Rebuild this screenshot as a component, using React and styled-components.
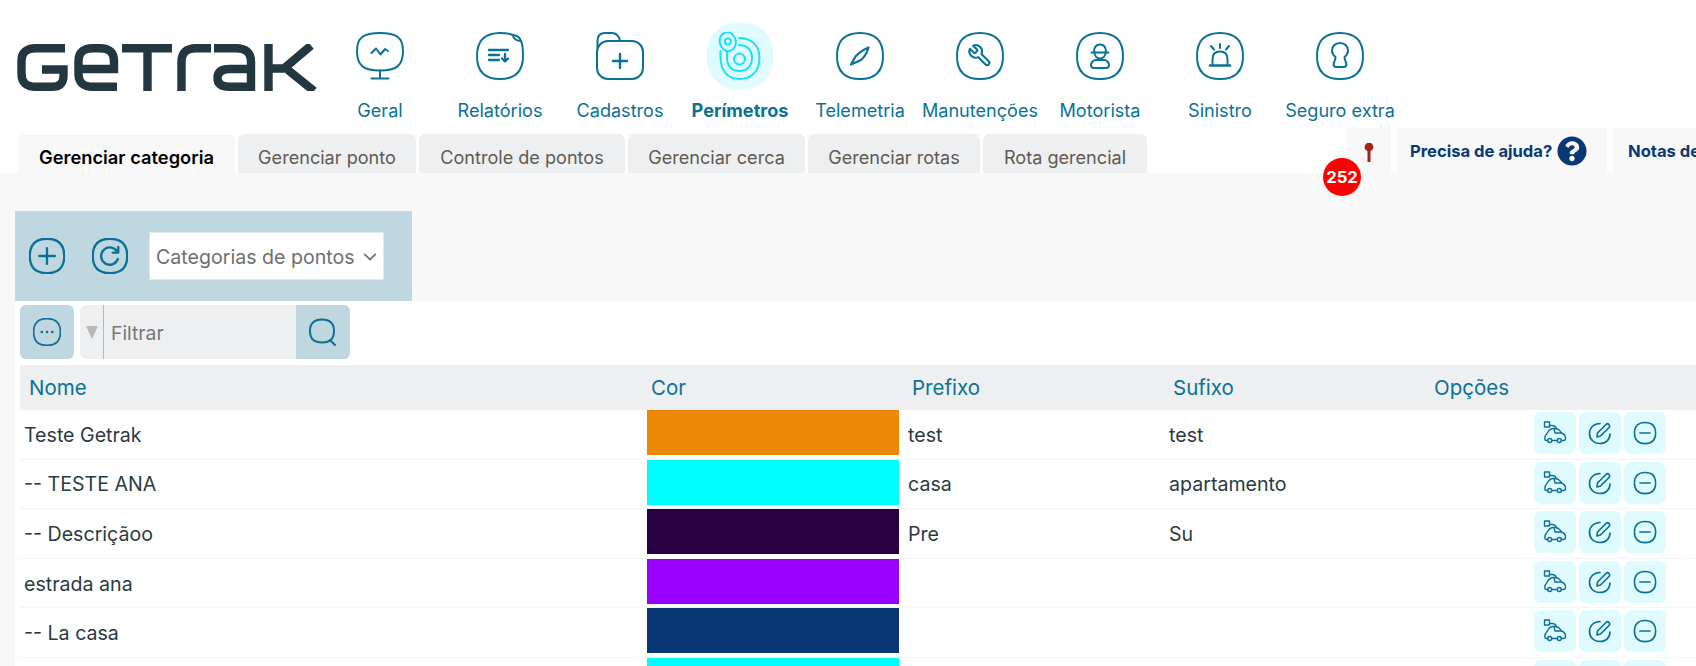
import React from 'react';
import styled, { createGlobalStyle } from 'styled-components';
import { FaQuestionCircle } from 'react-icons/fa';

const TEAL = '#0a7295';
const CYAN = '#17e3f4';
const SQUIRCLE = 'M24 1C39 1 47 9 47 24C47 39 39 47 24 47C9 47 1 39 1 24C1 9 9 1 24 1Z';

const GlobalStyle = createGlobalStyle`
  html, body {
    margin: 0;
    padding: 0;
    height: 100%;
    overflow: hidden;
    background: #f8f8f9;
    font-family: Inter, "Liberation Sans", sans-serif;
  }
`;

const Page = styled.div`
  width: 1696px;
  height: 666px;
  overflow: hidden;
`;

const Header = styled.header`
  background: #fff;
  height: 173px;
`;

const TopRow = styled.div`
  display: flex;
  height: 128px;
  padding-left: 17px;
`;

const LogoMark = styled.svg`
  width: 300px;
  height: 47px;
  margin: 44px 3px 0 0;
  flex: none;
  fill: none;
  stroke: #22373f;
  stroke-width: 8.4;
`;

const Nav = styled.nav`
  display: flex;
`;

const NavItem = styled.div`
  width: 120px;
  padding-top: 23px;
  display: flex;
  flex-direction: column;
  align-items: center;
`;

const NavIconWrap = styled.div`
  width: 66px;
  height: 66px;
  display: flex;
  align-items: center;
  justify-content: center;
  border-radius: 44%;
  color: ${(p) => (p.$active ? CYAN : TEAL)};
  background: ${(p) => (p.$active ? '#e0fbff' : 'transparent')};
`;

const NavLabel = styled.span`
  margin-top: 11px;
  font-size: 18.1px;
  line-height: 20px;
  white-space: nowrap;
  color: ${TEAL};
  font-weight: ${(p) => (p.$active ? 700 : 400)};
`;

const Glyph = styled.svg`
  width: ${(p) => p.$size}px;
  height: ${(p) => p.$h || p.$size}px;
  flex: none;
  fill: none;
  stroke: currentColor;
  stroke-width: ${(p) => p.$stroke || 2};
  stroke-linecap: round;
  stroke-linejoin: round;
`;

const BottomRow = styled.div`
  display: flex;
  align-items: flex-end;
  height: 45px;
`;

const Tabs = styled.div`
  flex: 0 0 1346px;
  display: flex;
  gap: 3px;
  padding-left: 18px;
  box-sizing: border-box;
`;

const Tab = styled.div`
  height: 39px;
  width: ${(p) => p.$w}px;
  padding-top: 7px;
  box-sizing: border-box;
  display: flex;
  align-items: center;
  justify-content: center;
  border-radius: 6px 6px 0 0;
  font-size: ${(p) => (p.$active ? 18.3 : 18.1)}px;
  white-space: nowrap;
  background: ${(p) => (p.$active ? '#f8f8f9' : '#eeeff1')};
  color: ${(p) => (p.$active ? '#000' : '#5f5a52')};
  font-weight: ${(p) => (p.$active ? 600 : 400)};
`;

const QuickLinks = styled.div`
  display: flex;
  gap: 6px;
  height: 45px;
`;

const PinBox = styled.div`
  position: relative;
  width: 45px;
  background: #f8f8f9;
  display: flex;
  justify-content: center;
  padding-top: 15px;
  box-sizing: border-box;
  color: #a1241a;
`;

const Badge = styled.span`
  position: absolute;
  left: -23px;
  top: 30px;
  width: 38px;
  height: 38px;
  border-radius: 50%;
  background: #ff0000;
  color: #fff;
  font-size: 16.6px;
  font-weight: 700;
  display: flex;
  align-items: center;
  justify-content: center;
`;

const HelpLink = styled.div`
  background: #f8f8f9;
  display: flex;
  align-items: center;
  gap: 5px;
  width: ${(p) => p.$w}px;
  padding-left: ${(p) => p.$pad}px;
  box-sizing: border-box;
  color: #0a3875;
  font-size: 16.6px;
  font-weight: 700;
  white-space: nowrap;
  overflow: hidden;
`;

const Band = styled.section`
  height: 128px;
  padding: 38px 0 0 15px;
  box-sizing: border-box;
  background: #f8f8f9;
`;

const Toolbar = styled.div`
  width: 397px;
  height: 90px;
  padding-left: 14px;
  box-sizing: border-box;
  display: flex;
  align-items: center;
  gap: 27px;
  background: #bfd7e0;
  color: ${TEAL};
`;

const SelectBox = styled.div`
  width: 235px;
  height: 48px;
  margin-left: -6px;
  padding: 1px 6px 0;
  box-sizing: border-box;
  display: flex;
  align-items: center;
  justify-content: space-between;
  background: #fff;
  border: 1px solid #e4e8ea;
  color: #6f6f6f;
  font-size: 19.6px;
  white-space: nowrap;
`;

const Panel = styled.main`
  margin-left: 15px;
  height: 365px;
  padding: 4px 0 0 5px;
  box-sizing: border-box;
  background: #fff;
  overflow: hidden;
`;

const FilterRow = styled.div`
  display: flex;
  gap: 6px;
  height: 54px;
  margin-bottom: 6px;
`;

const MoreButton = styled.div`
  width: 54px;
  height: 54px;
  border-radius: 6px;
  background: #bfd7e0;
  color: ${TEAL};
  display: flex;
  align-items: center;
  justify-content: center;
`;

const FilterBox = styled.div`
  width: 270px;
  display: flex;
  border-radius: 6px;
  overflow: hidden;
  background: #eeeff1;
`;

const FunnelCell = styled.div`
  width: 24px;
  box-sizing: border-box;
  border-right: 1px solid #b9b9b9;
  display: flex;
  align-items: center;
  justify-content: center;
  &::before {
    content: '';
    border-left: 6px solid transparent;
    border-right: 6px solid transparent;
    border-top: 13px solid #b8b8b8;
  }
`;

const FilterText = styled.div`
  flex: 1;
  padding: 2px 0 0 7px;
  display: flex;
  align-items: center;
  color: #777;
  font-size: 19.3px;
`;

const SearchButton = styled.div`
  width: 54px;
  background: #bfd7e0;
  color: ${TEAL};
  display: flex;
  align-items: center;
  justify-content: center;
`;

const HeadRow = styled.div`
  display: grid;
  grid-template-columns: 627px 261px 261px 261px 1fr;
  align-items: center;
  height: 45px;
  background: #eeeff1;
`;

const HeadCell = styled.div`
  padding-left: ${(p) => p.$pad}px;
  color: ${TEAL};
  font-size: 20.5px;
  font-weight: 400;
`;

const Row = styled.div`
  display: grid;
  grid-template-columns: 627px 261px 261px 261px 1fr;
  align-items: center;
  height: 49.6px;
  box-sizing: border-box;
  border-bottom: 1.5px solid #f5f5f6;
`;

const Cell = styled.div`
  padding: 1px 0 0 ${(p) => p.$pad || 0}px;
  color: #2b3a42;
  font-size: 19.6px;
`;

const Swatch = styled.div`
  align-self: start;
  width: 252px;
  height: 45px;
  background: ${(p) => p.$color};
`;

const Actions = styled.div`
  align-self: start;
  display: flex;
  gap: 3px;
  margin-top: 2px;
  padding-left: 104px;
`;

const ActionButton = styled.div`
  width: 42px;
  height: 42px;
  border-radius: 7px;
  background: #e0fbff;
  color: ${TEAL};
  display: flex;
  align-items: center;
  justify-content: center;
`;

const Logo = () => (
  <LogoMark viewBox="17 44 300 47" aria-label="Getrak">
    <path d="M65 48.2H36Q21.5 48.2 21.5 61V74Q21.5 86.8 36 86.8H52Q63.5 86.8 63.5 76V69.5H42" />
    <path d="M117 86.8H93Q78.5 86.8 78.5 74V61Q78.5 48.2 93 48.2H100Q114 48.2 114 61V69H79" />
    <path d="M122 48.2H172M147.5 48.2V91" />
    <path d="M181.5 91V62Q181.5 48.2 196 48.2H211" />
    <path d="M214 48.2H236Q251 48.2 251 62V91M251 69H230Q217.5 69 217.5 78Q217.5 86.8 230 86.8H251" />
    <path d="M268.5 44V91M268.5 68.5H284L311 45.5M288 70L314 91" />
  </LogoMark>
);

const navIcons = {
  geral: (
    <>
      <path d="M24 1C40 1 47 5 47 19C47 34 40 38.5 24 38.5C8 38.5 1 34 1 19C1 5 8 1 24 1Z" />
      <path d="M24 38.5V46M15.5 46.5H32.5" />
      <path d="M15.5 21L20 16.5L24.5 22.5L29 17L32 19" />
    </>
  ),
  relatorios: (
    <>
      <path d="M24 1C9 1 1 9 1 24C1 39 9 47 24 47C39 47 47 39 47 24C47 17 46.5 12 45 9C41 9 37 7 37 3C33 1.5 29 1 24 1Z" />
      <path d="M37 3C41 3.5 44 6 45 9" />
      <path d="M13 18H32M13 23H23M13 28H23M29 22V29M26 26.5L29 29.5L32 26.5" strokeWidth="2.3" />
    </>
  ),
  cadastros: (
    <>
      <path d="M1.5 16V9Q1.5 1 9 1H16Q22 1 24 8.5" />
      <rect x="1" y="9" width="46" height="38" rx="11" />
      <path d="M24 22V36M17 29H31" strokeWidth="2.4" />
    </>
  ),
  perimetros: (
    <>
      <ellipse cx="11.8" cy="9.7" rx="8" ry="9.5" transform="rotate(-12 11.8 9.7)" />
      <circle cx="11.8" cy="9.5" r="3" />
      <path d="M23 6C35 6 43.5 13 43.5 26C43.5 39 36 47 23.5 47C11 47 4.5 38 4.5 25V19" />
      <path d="M23 13C31 13 36 18 36 26C36 34 31 39 23.5 39C16 39 11 34 11 26V20" />
      <circle cx="23.5" cy="27" r="5.5" />
    </>
  ),
  telemetria: (
    <>
      <path d={SQUIRCLE} />
      <path d="M15 32.5L19.5 24.5C22.5 21 27 18 32.5 15.5C31 21 28.5 25 25 28Z" strokeWidth="2.2" />
    </>
  ),
  manutencoes: (
    <>
      <path d={SQUIRCLE} />
      <g transform="translate(36.5 11) scale(-1.05 1.05)">
        <path d="M14.7 6.3a1 1 0 0 0 0 1.4l1.6 1.6a1 1 0 0 0 1.4 0l3.77-3.77a6 6 0 0 1-7.94 7.94l-6.91 6.91a2.12 2.12 0 0 1-3-3l6.91-6.91a6 6 0 0 1 7.94-7.94l-3.76 3.76z" />
      </g>
    </>
  ),
  motorista: (
    <>
      <path d={SQUIRCLE} />
      <path d="M15.5 20.5H32.5M18 20C18 15 20.5 12.5 24 12.5C27.5 12.5 30 15 30 20" />
      <path d="M18.5 21C18.5 24 21 26.5 24 26.5C27 26.5 29.5 24 29.5 21" />
      <path d="M20 28H28C31 28 33 31 33 33C33 35 32 36 30 36H18C16 36 15 35 15 33C15 31 17 28 20 28Z" />
    </>
  ),
  sinistro: (
    <>
      <path d={SQUIRCLE} />
      <path d="M16.5 33V27C16.5 22 19.5 19.5 24 19.5C28.5 19.5 31.5 22 31.5 27V33" />
      <path d="M14 33.5H34" strokeWidth="2.6" />
      <path d="M24 12V16M15 14L18 17.5M33 14L30 17.5" />
    </>
  ),
  seguro: (
    <>
      <path d={SQUIRCLE} />
      <path d="M24 11C19 11 16 14.5 16 18.5C16 21.5 17.5 23.5 19.5 25C19.5 28 18 30 17.5 32C17.5 34 19 35 20.5 35H27.5C29 35 30.5 34 30.5 32C30 30 28.5 28 28.5 25C30.5 23.5 32 21.5 32 18.5C32 14.5 29 11 24 11Z" />
    </>
  ),
};

const navItems = [
  { key: 'geral', label: 'Geral' },
  { key: 'relatorios', label: 'Relatórios' },
  { key: 'cadastros', label: 'Cadastros' },
  { key: 'perimetros', label: 'Perímetros', active: true },
  { key: 'telemetria', label: 'Telemetria' },
  { key: 'manutencoes', label: 'Manutenções' },
  { key: 'motorista', label: 'Motorista' },
  { key: 'sinistro', label: 'Sinistro' },
  { key: 'seguro', label: 'Seguro extra' },
];

const tabs = [
  { label: 'Gerenciar categoria', w: 217, active: true },
  { label: 'Gerenciar ponto', w: 178 },
  { label: 'Controle de pontos', w: 206 },
  { label: 'Gerenciar cerca', w: 177 },
  { label: 'Gerenciar rotas', w: 172 },
  { label: 'Rota gerencial', w: 164 },
];

const rows = [
  { name: 'Teste Getrak', color: '#ec8806', prefix: 'test', suffix: 'test' },
  { name: '-- TESTE ANA', color: '#00ffff', prefix: 'casa', suffix: 'apartamento' },
  { name: '-- Descriçãoo', color: '#280042', prefix: 'Pre', suffix: 'Su' },
  { name: 'estrada ana', color: '#9900ff' },
  { name: '-- La casa', color: '#0a3875' },
  { name: '', color: '#00ffff' },
];

const RowActions = () => (
  <Actions>
    <ActionButton>
      <Glyph $size={24} $stroke={1.35} viewBox="0 0 24 24">
        <rect x="1.5" y="1" width="5" height="5" />
        <path d="M6.5 4.5H9C11 4.5 13 5.5 13.5 7.8" />
        <path d="M4.7 19.5H3.5Q1.8 19.5 1.8 17.5C1.8 15 3 13.5 4 12.5C5.5 9.5 7.5 7.5 10.5 7.5H12C15 7.5 17 9.5 18.5 12C21 13 22.5 15 22.5 17V17.5Q22.5 19.5 20.5 19.5H18.3M8.7 19.5H14.3" />
        <path d="M11 7.5L12 12H18.5" />
        <circle cx="6.7" cy="19.5" r="2" />
        <circle cx="16.3" cy="19.5" r="2" />
      </Glyph>
    </ActionButton>
    <ActionButton>
      <Glyph $size={24} $stroke={1.7} viewBox="0 0 24 24">
        <path d="M12 2.5C6 2.5 1.5 6.5 1.5 12.5C1.5 18.5 6 22.5 12 22.5C18 22.5 22 18.5 22 13" />
        <path d="M9 16L9.5 12L18 3.5A2.1 2.1 0 0 1 21 6.5L12.5 15Z" />
      </Glyph>
    </ActionButton>
    <ActionButton>
      <Glyph $size={24} $stroke={3.4} viewBox="0 0 48 48">
        <path d={SQUIRCLE} transform="translate(2 2) scale(.92)" />
        <path d="M14 24H34" />
      </Glyph>
    </ActionButton>
  </Actions>
);

export default function App() {
  return (
    <Page>
      <GlobalStyle />
      <Header>
        <TopRow>
          <Logo />
          <Nav>
            {navItems.map((item) => (
              <NavItem key={item.key}>
                <NavIconWrap $active={item.active}>
                  <Glyph $size={48} viewBox="0 0 48 48">
                    {navIcons[item.key]}
                  </Glyph>
                </NavIconWrap>
                <NavLabel $active={item.active}>{item.label}</NavLabel>
              </NavItem>
            ))}
          </Nav>
        </TopRow>
        <BottomRow>
          <Tabs>
            {tabs.map((tab) => (
              <Tab key={tab.label} $w={tab.w} $active={tab.active}>
                {tab.label}
              </Tab>
            ))}
          </Tabs>
          <QuickLinks>
            <PinBox>
              <Glyph $size={10} $h={20} $stroke={2} viewBox="0 0 10 20">
                <circle cx="5" cy="4" r="3.4" fill="currentColor" />
                <path d="M5 6V19" strokeWidth="3" strokeLinecap="butt" />
              </Glyph>
              <Badge>252</Badge>
            </PinBox>
            <HelpLink $w={210} $pad={13}>
              Precisa de ajuda?
              <FaQuestionCircle size={30} />
            </HelpLink>
            <HelpLink $w={83} $pad={15}>
              Notas de versão
            </HelpLink>
          </QuickLinks>
        </BottomRow>
      </Header>
      <Band>
        <Toolbar>
          <Glyph $size={36} $stroke={3.1} viewBox="0 0 48 48">
            <path d={SQUIRCLE} />
            <path d="M24 13.5V34.5M13.5 24H34.5" />
          </Glyph>
          <Glyph $size={36} $stroke={3.1} viewBox="0 0 48 48">
            <path d={SQUIRCLE} />
            <path d="M34 19A11.5 11.5 0 1 0 34.5 28" />
            <path d="M35 12V19.5H27.5" />
          </Glyph>
          <SelectBox>
            Categorias de pontos
            <Glyph $size={14} $stroke={2} viewBox="0 0 16 16">
              <path d="M2 5L8 11L14 5" />
            </Glyph>
          </SelectBox>
        </Toolbar>
      </Band>
      <Panel>
        <FilterRow>
          <MoreButton>
            <Glyph $size={28} $stroke={3} viewBox="0 0 48 48">
              <path d={SQUIRCLE} />
              <path d="M15 24H15.1M24 24H24.1M33 24H33.1" strokeWidth="4.4" />
            </Glyph>
          </MoreButton>
          <FilterBox>
            <FunnelCell />
            <FilterText>Filtrar</FilterText>
            <SearchButton>
              <Glyph $size={28} $stroke={2} viewBox="0 0 28 28">
                <path d="M13 1.5C21 1.5 25 5.5 25 13C25 20.5 21 24.5 13 24.5C5 24.5 1 20.5 1 13C1 5.5 5 1.5 13 1.5Z" />
                <path d="M21 22L26 27" />
              </Glyph>
            </SearchButton>
          </FilterBox>
        </FilterRow>
        <HeadRow>
          <HeadCell $pad={9}>Nome</HeadCell>
          <HeadCell $pad={4}>Cor</HeadCell>
          <HeadCell $pad={4}>Prefixo</HeadCell>
          <HeadCell $pad={4}>Sufixo</HeadCell>
          <HeadCell $pad={4}>Opções</HeadCell>
        </HeadRow>
        {rows.map((row, index) => (
          <Row key={index}>
            <Cell $pad={4}>{row.name}</Cell>
            <Swatch $color={row.color} />
            <Cell>{row.prefix}</Cell>
            <Cell>{row.suffix}</Cell>
            <RowActions />
          </Row>
        ))}
      </Panel>
    </Page>
  );
}
